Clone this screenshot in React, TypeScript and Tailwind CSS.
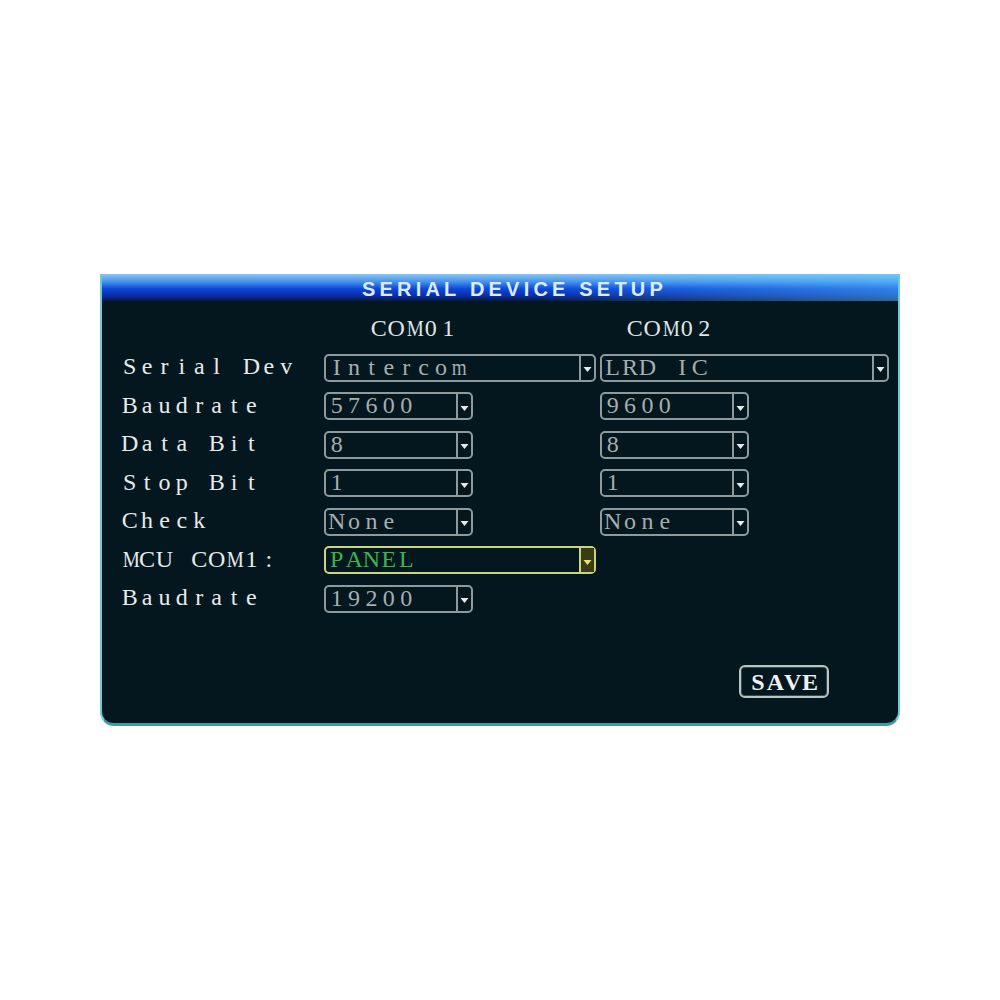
import React from "react";

const SERIF = "font-['Liberation_Serif','Times_New_Roman',serif]";
const WIDE = new Set(["M", "m", "W", "w"]);

// The DVR menu font is a fixed-pitch serif; lay glyphs out in equal cells.
function Mono({ text }: { text: string }) {
  return (
    <span className="inline-flex">
      {[...text].map((c, i) => (
        <span
          key={i}
          className={`inline-block w-[17.4px] text-center ${WIDE.has(c) ? "scale-x-[0.8]" : ""}`}
        >
          {c === " " ? "\u00a0" : c}
        </span>
      ))}
    </span>
  );
}

function Arrow({ active }: { active?: boolean }) {
  return (
    <div
      className={`w-[15px] h-full flex items-center justify-center border-l-2 ${
        active ? "border-[#c9d77a] bg-[#3a3d14]" : "border-[#8e9a9c]"
      }`}
    >
      <svg width="9" height="7" viewBox="0 0 9 7" className="mt-[4px]">
        <path d="M0.5 1 H8.5 L4.5 6 Z" fill={active ? "#e4e66a" : "#e6eaea"} />
      </svg>
    </div>
  );
}

function Select({ value, w, active }: { value: string; w: string; active?: boolean }) {
  return (
    <div
      className={`${w} h-[28px] flex items-stretch rounded-[5px] border-2 ${
        active ? "border-[#c9d77a]" : "border-[#8e9a9c]"
      }`}
    >
      <div
        className={`flex-1 flex items-center pl-[2px] pb-[2px] text-[24px] leading-none ${SERIF} ${
          active ? "text-[#3fb24c]" : "text-[#a6aeae]"
        }`}
      >
        <Mono text={value} />
      </div>
      <Arrow active={active} />
    </div>
  );
}

const ROWS: { label: string; c1: [string, string]; c2?: [string, string]; active?: boolean }[] = [
  { label: "Serial Dev", c1: ["Intercom", "w-[272px]"], c2: ["LRD IC", "w-[289px]"] },
  { label: "Baudrate", c1: ["57600", "w-[149px]"], c2: ["9600", "w-[149px]"] },
  { label: "Data Bit", c1: ["8", "w-[149px]"], c2: ["8", "w-[149px]"] },
  { label: "Stop Bit", c1: ["1", "w-[149px]"], c2: ["1", "w-[149px]"] },
  { label: "Check", c1: ["None", "w-[149px]"], c2: ["None", "w-[149px]"] },
  { label: "MCU COM1:", c1: ["PANEL", "w-[272px]"], active: true },
  { label: "Baudrate", c1: ["19200", "w-[149px]"] },
];

export default function App() {
  return (
    <div className="w-[1000px] h-[1000px] bg-white pt-[274px] pl-[100px]">
      <div className="w-[800px] h-[452px] flex flex-col rounded-b-[14px] border-x-2 border-b-[3px] border-[#6fcad8] border-b-[#3a9cab] bg-[#04161e] overflow-hidden">
        {/* title bar */}
        <div className="h-[27px] flex items-center justify-center bg-[linear-gradient(90deg,rgba(0,0,0,0)_55%,rgba(90,200,255,0.45)_100%),linear-gradient(180deg,#86c6f6_0%,#4a92ea_28%,#0c48da_55%,#0a2ea8_80%,#061a40_100%)]">
          <span className="text-[20px] font-bold tracking-[4.2px] text-[#dcecff] font-['Liberation_Sans',Arial,sans-serif] leading-none pt-[2px] pl-[29px]">
            SERIAL DEVICE SETUP
          </span>
        </div>

        {/* body */}
        <div className="flex-1 flex flex-col pl-[19px] pt-[9px]">
          <div
            className={`grid grid-cols-[203px_276px_1fr] auto-rows-[38.5px] items-center text-[24px] leading-none ${SERIF}`}
          >
            <div />
            <div className="pl-[46px] pb-[2px] text-[#dfe6e6]">
              <Mono text="COM01" />
            </div>
            <div className="pl-[26px] pb-[2px] text-[#dfe6e6]">
              <Mono text="COM02" />
            </div>
            {ROWS.map((r, i) => (
              <React.Fragment key={i}>
                <div className="pb-[3px] text-[#e6ebeb]">
                  <Mono text={r.label} />
                </div>
                <div>
                  <Select value={r.c1[0]} w={r.c1[1]} active={r.active} />
                </div>
                <div>{r.c2 && <Select value={r.c2[0]} w={r.c2[1]} />}</div>
              </React.Fragment>
            ))}
          </div>

          <div className="flex justify-end pr-[69px] mt-[47px]">
            <div className="w-[90px] h-[33px] rounded-[6px] border-2 border-[#b9c5c5] flex items-center justify-center shadow-[inset_0_0_0_1px_#3b4a4c]">
              <span className={`text-[24px] font-bold leading-none text-[#eef2f2] ${SERIF}`}>
                <Mono text="SAVE" />
              </span>
            </div>
          </div>
        </div>
      </div>
    </div>
  );
}
